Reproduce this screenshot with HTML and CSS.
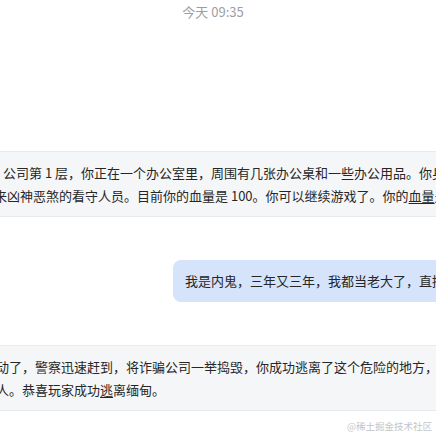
FILE: index.html
```html
<!DOCTYPE html>
<html lang="zh-CN">
<head>
<meta charset="utf-8">
<title>Chat</title>
<link rel="stylesheet" href="styles.css">
</head>
<body>
<div class="chat">
  <div class="time">今天 09:35</div>
  <div class="bubble bubble-bot bubble-first">公司第 1 层，你正在一个办公室里，周围有几张办公桌和一些办公用品。你身边<br>来凶神恶煞的看守人员。目前你的血量是 100。你可以继续游戏了。你的<span class="mark">血量</span>是</div>
  <div class="bubble bubble-user">我是内鬼，三年又三年，我都当老大了，直接</div>
  <div class="bubble bubble-bot bubble-last">动了，警察迅速赶到，将诈骗公司一举捣毁，你成功逃离了这个危险的地方，<br>人。恭喜玩家成功<span class="mark">逃</span>离缅甸。</div>
</div>
<div class="watermark">@稀土掘金技术社区</div>
</body>
</html>
```
FILE: styles.css
```css
html, body {
  margin: 0;
  padding: 0;
  width: 436px;
  height: 436px;
  overflow: hidden;
  background: #ffffff;
}

body {
  position: relative;
  font-family: "Noto Sans CJK SC", "Microsoft YaHei", sans-serif;
  color: #262626;
}

.chat {
  display: flex;
  flex-direction: column;
  align-items: flex-start;
}

.time {
  align-self: stretch;
  text-align: center;
  padding: 3px 10px 0 0;
  height: 21px;
  font-size: 13px;
  line-height: 18px;
  color: #9a9ea6;
}

.bubble {
  font-size: 13px;
  white-space: nowrap;
  box-sizing: border-box;
}

.bubble-bot {
  margin-left: -18px;
  width: 480px;
  padding: 9px 12px;
  line-height: 23px;
  background: #f5f6f8;
  border-top: 1px solid #e8eaed;
  border-bottom: 1px solid #e8eaed;
}

.bubble-first {
  margin-top: 127px;
  text-indent: 9px;
}

.bubble-last {
  margin-top: 43px;
  padding-left: 14px;
}

.bubble-user {
  margin-top: 43px;
  margin-left: 173px;
  padding: 10px 12px;
  line-height: 22px;
  background: #d5e3fb;
  border-radius: 8px;
  width: 300px;
}

.mark {
  text-decoration: underline;
  text-decoration-thickness: 1px;
  text-underline-offset: 2px;
}

.watermark {
  position: absolute;
  right: 4px;
  bottom: 4px;
  font-family: "Noto Sans CJK SC", serif;
  font-size: 9.5px;
  line-height: 12px;
  color: #c3c5c9;
}
```
